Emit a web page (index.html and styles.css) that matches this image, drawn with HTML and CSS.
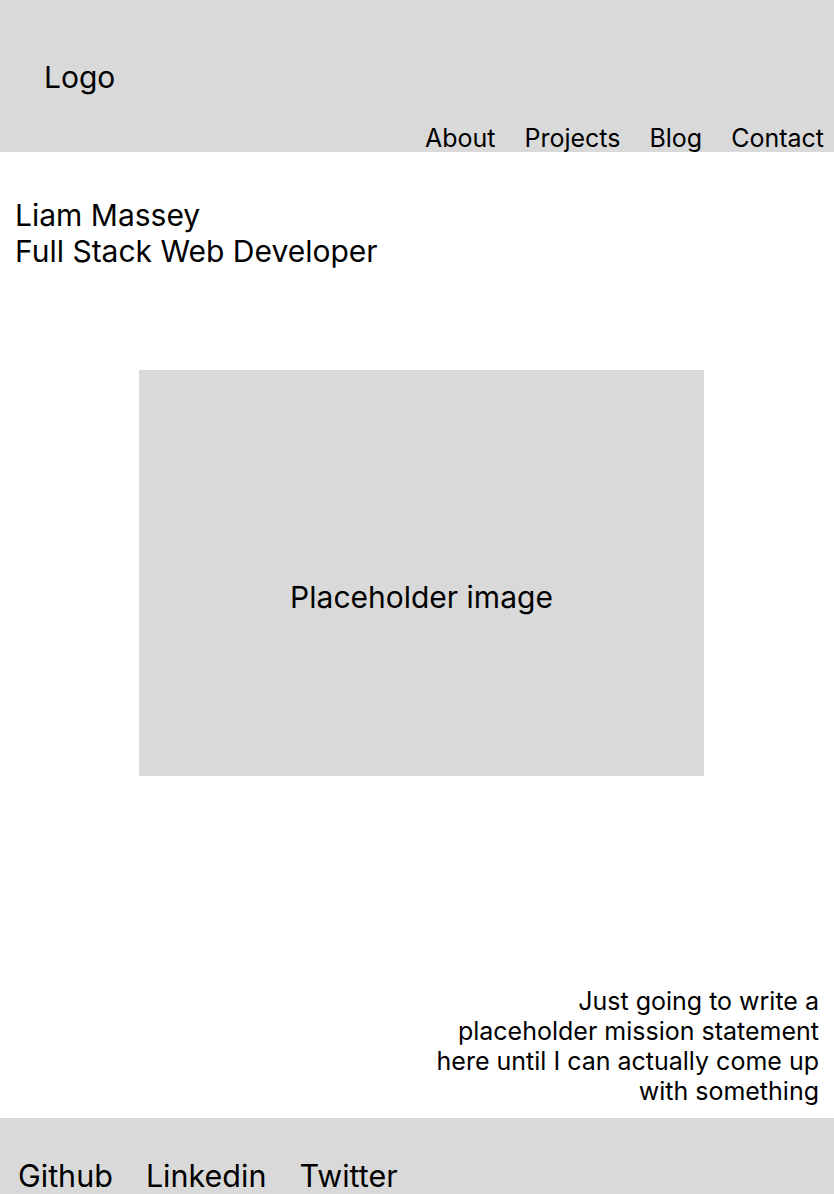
FILE: index.html
```html
<!DOCTYPE html>
<html lang="en">

<head>
    <meta charset="UTF-8">
    <meta name="viewport" content="width=device-width, initial-scale=1.0">
    <title>Liam Massey - Portfolio</title>
    <link rel="stylesheet" href="styles.css">
</head>

<body>
    <header class="site-header">
        <div class="logo">Logo</div>
        <nav class="main-nav">
            <a href="#about">About</a>
            <a href="#projects">Projects</a>
            <a href="#blog">Blog</a>
            <a href="#contact">Contact</a>
        </nav>
    </header>

    <main>
        <section class="intro">
            <h1>Liam Massey<br>Full Stack Web Developer</h1>
        </section>

        <div class="hero-image">Placeholder image</div>

        <p class="mission">
            Just going to write a<br>
            placeholder mission statement<br>
            here until I can actually come up<br>
            with something
        </p>
    </main>

    <footer class="site-footer">
        <a href="#">Github</a>
        <a href="#">Linkedin</a>
        <a href="#">Twitter</a>
    </footer>
</body>
</html>
```

FILE: styles.css
```css
body {
    font-family: 'Inter', 'Liberation Sans', sans-serif;
    margin: 0;
    padding: 0;
    color: #000;
    background-color: #fff;
}

a {
    color: #000;
    text-decoration: none;
}

.site-header {
    background-color: #d9d9d9;
    height: 152px;
    display: flex;
    flex-direction: column;
    justify-content: space-between;
    overflow: hidden;
}

.logo {
    font-size: 30px;
    line-height: 36px;
    padding: 59px 0 0 44px;
}

.main-nav {
    display: flex;
    justify-content: flex-end;
    gap: 29px;
    padding-right: 10px;
    font-size: 25px;
    line-height: 28px;
}

main {
    display: flex;
    flex-direction: column;
}

.intro h1 {
    margin: 0;
    padding: 45px 0 0 15px;
    font-size: 30px;
    font-weight: 400;
    line-height: 36px;
}

.hero-image {
    align-self: flex-start;
    margin: 101px 0 0 139px;
    width: 565px;
    height: 406px;
    background-color: #d9d9d9;
    display: flex;
    align-items: center;
    justify-content: center;
    font-size: 30px;
    padding-top: 48px;
    box-sizing: border-box;
}

.mission {
    margin: 210px 15px 0 0;
    text-align: right;
    font-size: 25px;
    line-height: 30px;
    height: 132px;
}

.site-footer {
    background-color: #d9d9d9;
    height: 76px;
    display: flex;
    align-items: flex-end;
    gap: 33px;
    padding: 0 0 0 18px;
    font-size: 30.5px;
    line-height: 36px;
}
```
